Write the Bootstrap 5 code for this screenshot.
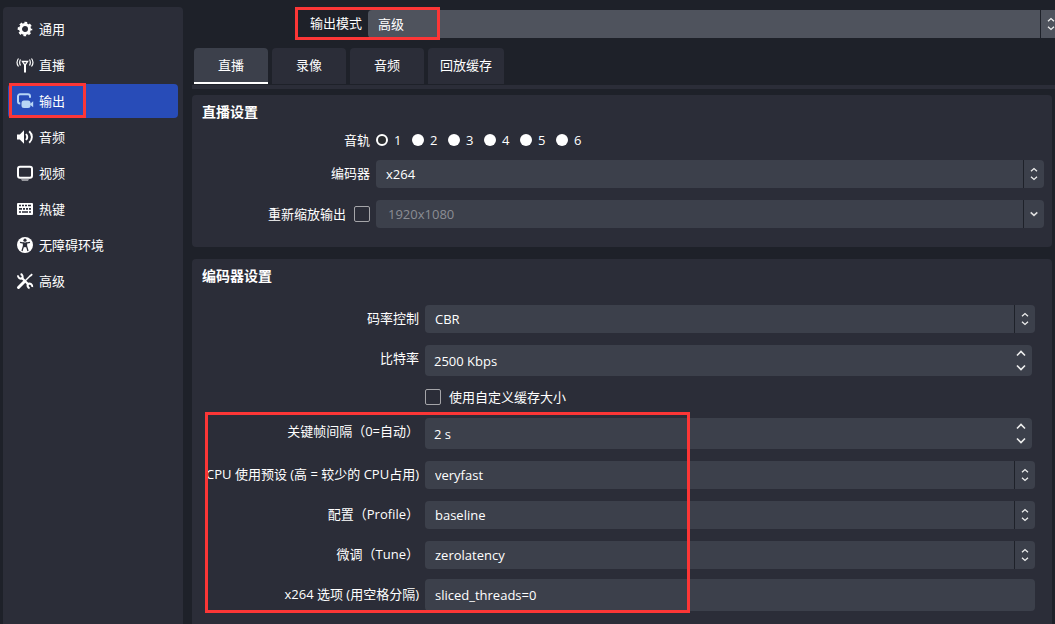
<!DOCTYPE html>
<html lang="zh-CN" data-bs-theme="dark">
<head>
<meta charset="utf-8">
<meta name="viewport" content="width=device-width, initial-scale=1">
<title>设置 - 输出</title>
<link href="https://cdn.jsdelivr.net/npm/bootstrap@5.3.0/dist/css/bootstrap.min.css" rel="stylesheet">
<style>
  :root {
    --app-bg: #1e2129;
    --panel: #2b2d38;
    --field: #3c404b;
    --mark-red: #fc3636;
  }
  body {
    background: var(--app-bg);
    color: #fff;
    font-family: "Open Sans", "Noto Sans CJK SC", sans-serif;
    font-size: 13px;
    line-height: 20px;
  }
  .shell { padding: 7px 0 0 3px; gap: 9px; }
  .side { width: 180px; background: var(--panel); border-radius: 4px 4px 0 0; padding: 5px; gap: 2px; }
  .side a { height: 34px; padding: 0 8px; gap: 5px; border-radius: 4px; color: #fff; }
  .side a.active { background: #284cb8; }
  .side svg { width: 18px; height: 18px; flex: none; }
  .marker { position: absolute; border: 3px solid var(--mark-red); pointer-events: none; z-index: 2; }
  .marker-nav { left: 1px; top: -1px; width: 77px; height: 35px; }
  .marker-mode { left: 103px; top: 0; width: 145px; height: 33px; }
  .marker-encoder { left: 13px; top: -6px; width: 485px; bottom: -2px; }

  .mode-row { padding-top: 3px; gap: 6px; }
  .mode-row label { width: 170px; text-align: right; line-height: 26px; }
  .tabs { margin-top: 10px; padding: 0 2px; gap: 4px; }
  .tabs button { height: 36px; min-width: 74px; padding: 0 12px; border: 0; border-bottom: 2px solid transparent; border-radius: 4px 4px 0 0; background: var(--panel); color: #fff; }
  .tabs button:not(.active) { border-bottom-color: var(--panel); }
  .tabs button.active { background: var(--field); border-bottom-color: #fff; }
  .tab-line { height: 4px; margin-top: 1px; background: var(--panel); }

  .panel { background: var(--panel); border-radius: 4px; margin-right: 3px; }
  .panel h2 { font-size: 14px; line-height: 20px; font-weight: 700; margin: 0; padding-left: 10px; }
  .panel-stream { margin-top: 6px; padding: 7px 8px 19px 0; }
  .panel-encoder { margin-top: 12px; padding: 7px 17px 13px 0; border-radius: 4px 4px 0 0; }

  .field-row { display: flex; gap: 6px; }
  .field-row > .cap { flex: none; text-align: right; line-height: 26px; }
  .panel-stream .cap { width: 178px; }
  .panel-encoder .cap { width: 227px; }
  .rows { display: flex; flex-direction: column; gap: 12px; }
  .panel-stream > .rows { padding-top: 10px; }
  .panel-encoder > .rows { padding-top: 19px; }

  .combo, .line-box {
    flex: 1; min-width: 0; height: 28px; padding: 0 32px 0 10px; border: 0; border-radius: 4px;
    background-color: var(--field); color: #fff; appearance: none; line-height: 20px;
  }
  .combo {
    background-image:
      url("data:image/svg+xml,%3Csvg xmlns='http://www.w3.org/2000/svg' width='8' height='14' fill='none' stroke='%23eee' stroke-width='1.3'%3E%3Cpath d='M1 4.2 4 1.6l3 2.6M1 9.8l3 2.6 3-2.6'/%3E%3C/svg%3E"),
      linear-gradient(#1e2129, #1e2129);
    background-repeat: no-repeat;
    background-size: 8px 14px, 1px 100%;
    background-position: right 6px center, right 20px top;
  }
  .combo:disabled { color: #8b8d94; opacity: 1; padding-left: 12px; }
  .combo-drop {
    background-image:
      url("data:image/svg+xml,%3Csvg xmlns='http://www.w3.org/2000/svg' width='8' height='14' fill='none' stroke='%23ddd' stroke-width='1.6'%3E%3Cpath d='M.7 5.4 4 8.4l3.3-3'/%3E%3C/svg%3E"),
      linear-gradient(#1e2129, #1e2129);
  }
  .combo-mode { background-color: #4f535d; border-radius: 4px 0 0 4px; background-position: right 0 center, right 14px top; }
  .line-box { height: 32px; margin-top: -2px; }
  .spin { flex: 1; min-width: 0; height: 31px; margin-right: 3px; border-radius: 4px; background: var(--field); }
  .spin input { flex: 1; min-width: 0; padding: 0 9px; border: 0; background: transparent; color: #fff; }
  .spin button { width: 23px; height: 14px; padding: 0; border: 0; background: transparent; display: flex; align-items: center; justify-content: center; }
  .spin svg { width: 10px; height: 7px; fill: none; stroke: #eee; stroke-width: 1.6; }

  .tick-line { height: 18px; }
  .tick { appearance: none; width: 16px; height: 16px; margin: 0; border: 1px solid #a5a5a9; border-radius: 2px; background: transparent; flex: none; }
  .track { appearance: none; width: 12px; height: 12px; margin: 0; border-radius: 50%; background: #fff; flex: none; }
  .track:checked { background: #2b2d30; border: 2px solid #fff; }
  .tracks label { width: 36px; gap: 6px; }
</style>
</head>
<body>
<div class="shell d-flex min-vh-100 overflow-hidden">
  <nav class="side d-flex flex-column flex-shrink-0" aria-label="设置分类">
    <a href="#" class="d-flex align-items-center text-decoration-none">
      <svg viewBox="0 0 18 18"><circle cx="9" cy="9" r="4.500" fill="none" stroke="#fff" stroke-width="3"/><circle cx="9" cy="9" r="6.300" fill="none" stroke="#fff" stroke-width="2" stroke-dasharray="2.700 2.248" stroke-dashoffset="1.350"/></svg>通用</a>
    <a href="#" class="d-flex align-items-center text-decoration-none">
      <svg viewBox="0 0 18 18" fill="none" stroke="#fff"><path d="M5.200 4.800h7.600L10 9v7.500H8V9z" fill="#fff" stroke="none"/><path d="M7.500 6.200h3L9 8z" fill="#2b2d38" stroke="none"/><path d="M4.500 3.500c-1 1.800-1 4.200 0 6M2.500 2.500C.8 4.800.8 8.200 2.500 10.500M13.500 3.500c1 1.800 1 4.200 0 6M15.500 2.500c1.700 2.300 1.700 5.700 0 8" stroke-width="1.200"/></svg>直播</a>
    <a href="#" class="active position-relative d-flex align-items-center text-decoration-none" aria-current="page">
      <svg viewBox="0 0 18 18"><path d="M4.300 11.500H4A2 2 0 0 1 2 9.500V4.300a2 2 0 0 1 2-2h8a2 2 0 0 1 2 2v1.500" fill="none" stroke="#b7d5f5" stroke-width="2"/><rect x="5.500" y="8.500" width="9" height="7.500" rx="2.500" fill="#b7d5f5"/><path d="m13.500 12.200 3.700-3v6z" fill="#b7d5f5"/></svg>输出<span class="marker marker-nav"></span></a>
    <a href="#" class="d-flex align-items-center text-decoration-none">
      <svg viewBox="0 0 18 18"><path d="M1 6.500h2.800L8 2.300v13.400l-4.200-4.200H1z" fill="#fff"/><path d="M10 6c1.500 1.800 1.500 4.200 0 6M13.200 3.300c3.600 3.400 3.600 8 0 11.400" fill="none" stroke="#fff" stroke-width="1.900"/></svg>音频</a>
    <a href="#" class="d-flex align-items-center text-decoration-none">
      <svg viewBox="0 0 18 18"><rect x="2" y="2.800" width="14" height="11" rx="2" fill="none" stroke="#fff" stroke-width="2"/><path d="M5 15.500h8l-1 1H6z" fill="#fff"/></svg>视频</a>
    <a href="#" class="d-flex align-items-center text-decoration-none">
      <svg viewBox="0 0 18 18"><rect x="1" y="3" width="16" height="12" rx="1" fill="#fff"/><path d="M3 5.500h2m1 0h2m1 0h2m1 0h3M3 8.800h3m1 0h2m1 0h2m1 0h2M3 12h2m1 0h6m1 0h2" stroke="#2b2d38" stroke-width="1.700"/></svg>热键</a>
    <a href="#" class="d-flex align-items-center text-decoration-none">
      <svg viewBox="0 0 18 18"><circle cx="9" cy="9" r="8" fill="#fff"/><circle cx="9" cy="4.200" r="1.600" fill="#2b2d38"/><path d="M4 6.300 7.500 7v3L6 15M14 6.300 10.500 7v3l1.500 5" fill="none" stroke="#2b2d38" stroke-width="1.300"/><path d="M7 6.500h4v4.700H7z" fill="#2b2d38"/></svg>无障碍环境</a>
    <a href="#" class="d-flex align-items-center text-decoration-none">
      <svg viewBox="0 0 18 18" fill="none" stroke="#fff"><path d="M2.500 15.500 8 10" stroke-width="3" stroke-linecap="round"/><path d="m8 10 6.500-6.500" stroke-width="1.500"/><path d="m13.500 3.500 2-2 1.300 1.300-2 2z" fill="#fff" stroke="none"/><path d="m5.500 5.500 7.500 7.500" stroke-width="2.200"/><path d="M2 3.300A3 3 0 0 0 6.300 6.300 3 3 0 0 0 4.600 2" stroke-width="2"/><path d="M16.200 15A3 3 0 0 0 12 11.800 3 3 0 0 0 13.600 16.300" stroke-width="2"/></svg>高级</a>
  </nav>

  <main class="d-flex flex-column flex-grow-1">
    <div class="mode-row d-flex position-relative">
      <label for="mode">输出模式</label>
      <select id="mode" class="combo combo-mode"><option>高级</option><option>简单</option></select>
      <span class="marker marker-mode"></span>
    </div>
    <div class="tabs d-flex" role="tablist">
      <button type="button" role="tab" class="active" aria-selected="true">直播</button>
      <button type="button" role="tab" aria-selected="false">录像</button>
      <button type="button" role="tab" aria-selected="false">音频</button>
      <button type="button" role="tab" aria-selected="false">回放缓存</button>
    </div>
    <div class="tab-line"></div>

    <section class="panel panel-stream">
      <h2>直播设置</h2>
      <div class="field-row align-items-center mt-2" role="radiogroup" aria-labelledby="trackCap">
        <span class="cap lh-sm" id="trackCap">音轨</span>
        <div class="tracks d-flex">
          <label class="d-flex align-items-center"><input class="track" type="radio" name="track" checked>1</label>
          <label class="d-flex align-items-center"><input class="track" type="radio" name="track">2</label>
          <label class="d-flex align-items-center"><input class="track" type="radio" name="track">3</label>
          <label class="d-flex align-items-center"><input class="track" type="radio" name="track">4</label>
          <label class="d-flex align-items-center"><input class="track" type="radio" name="track">5</label>
          <label class="d-flex align-items-center"><input class="track" type="radio" name="track">6</label>
        </div>
      </div>
      <div class="rows">
        <div class="field-row">
          <label class="cap" for="encoder">编码器</label>
          <select id="encoder" class="combo"><option>x264</option></select>
        </div>
        <div class="field-row">
          <label class="cap d-flex align-items-center justify-content-end gap-2">重新缩放输出<input class="tick" type="checkbox"></label>
          <select class="combo combo-drop" aria-label="缩放分辨率" disabled><option>1920x1080</option></select>
        </div>
      </div>
    </section>

    <section class="panel panel-encoder flex-grow-1">
      <h2>编码器设置</h2>
      <div class="rows">
        <div class="field-row">
          <label class="cap" for="rate">码率控制</label>
          <select id="rate" class="combo"><option>CBR</option></select>
        </div>
        <div class="field-row">
          <label class="cap" for="bitrate">比特率</label>
          <div class="spin d-flex align-items-center">
            <input id="bitrate" type="text" value="2500 Kbps">
            <div><button type="button" aria-label="增加比特率"><svg viewBox="0 0 10 7"><path d="m1 5.500 4-4 4 4"/></svg></button><button type="button" aria-label="减少比特率"><svg viewBox="0 0 10 7"><path d="m1 1.500 4 4 4-4"/></svg></button></div>
          </div>
        </div>
        <div class="field-row tick-line align-items-center">
          <span class="cap"></span>
          <label class="d-flex align-items-center gap-2"><input class="tick" type="checkbox">使用自定义缓存大小</label>
        </div>
        <div class="rows position-relative">
          <span class="marker marker-encoder"></span>
          <div class="field-row">
            <label class="cap" for="keyint">关键帧间隔（0=自动）</label>
            <div class="spin d-flex align-items-center">
              <input id="keyint" type="text" value="2 s">
              <div><button type="button" aria-label="增加间隔"><svg viewBox="0 0 10 7"><path d="m1 5.500 4-4 4 4"/></svg></button><button type="button" aria-label="减少间隔"><svg viewBox="0 0 10 7"><path d="m1 1.500 4 4 4-4"/></svg></button></div>
            </div>
          </div>
          <div class="field-row">
            <label class="cap text-nowrap" for="preset">CPU 使用预设 (高 = 较少的 CPU占用)</label>
            <select id="preset" class="combo"><option>veryfast</option></select>
          </div>
          <div class="field-row">
            <label class="cap" for="profile">配置（Profile）</label>
            <select id="profile" class="combo"><option>baseline</option></select>
          </div>
          <div class="field-row">
            <label class="cap" for="tune">微调（Tune）</label>
            <select id="tune" class="combo"><option>zerolatency</option></select>
          </div>
          <div class="field-row">
            <label class="cap" for="opts">x264 选项 (用空格分隔)</label>
            <input id="opts" class="line-box" type="text" value="sliced_threads=0">
          </div>
        </div>
      </div>
    </section>
  </main>
</div>
<script src="https://cdn.jsdelivr.net/npm/bootstrap@5.3.0/dist/js/bootstrap.bundle.min.js"></script>
</body>
</html>
